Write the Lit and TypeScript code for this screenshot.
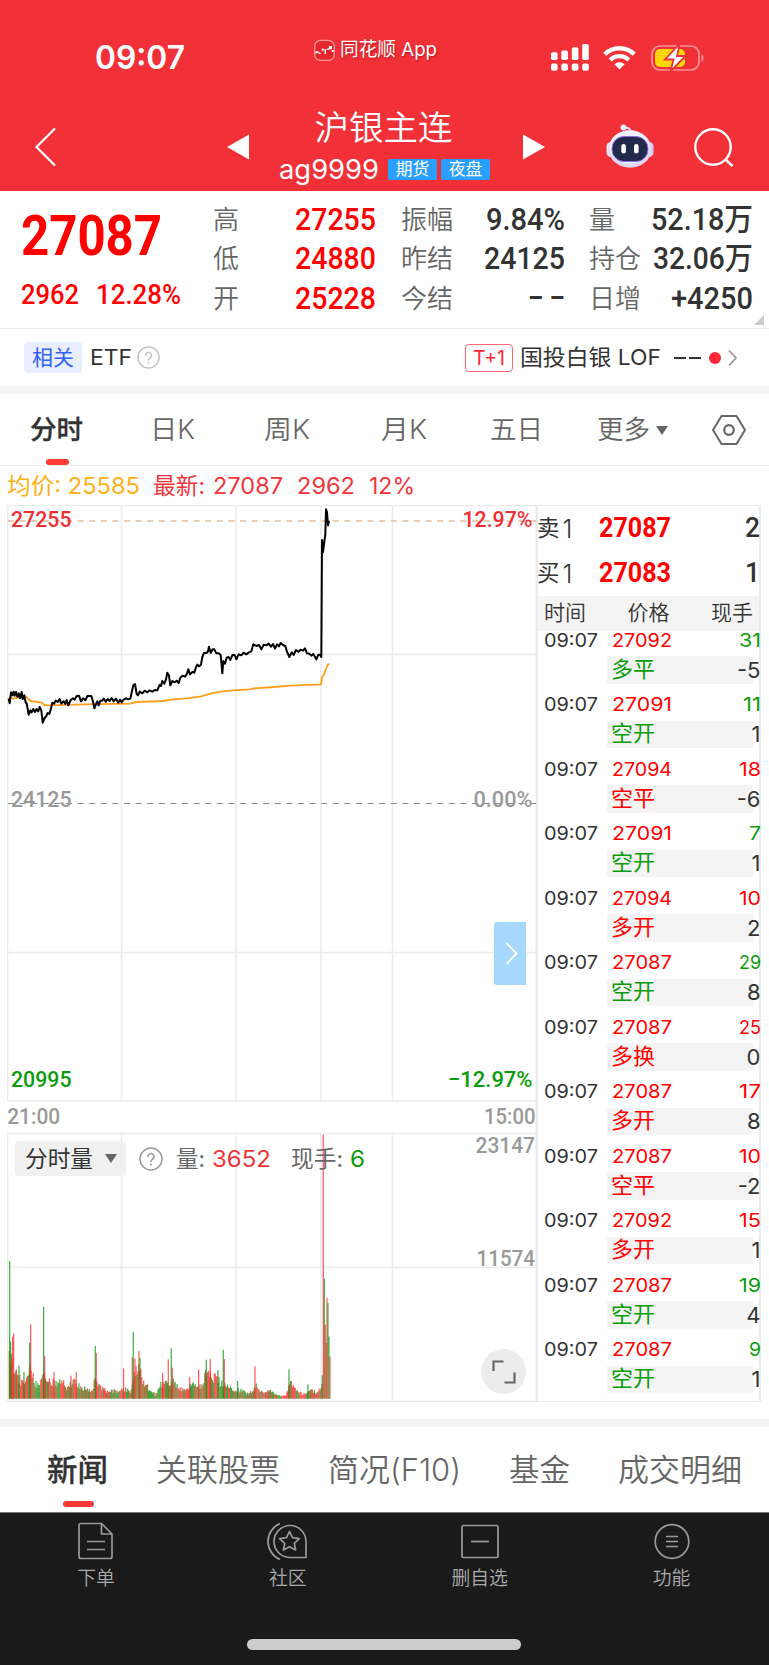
import { LitElement, html, svg, css } from "lit";
import { customElement, property, query } from "lit/decorators.js";

/** Single line of text, condensed or widened horizontally to a set width. */
@customElement("fit-text")
class FitText extends LitElement {
  static styles = css`
    :host { display: block; flex: none; white-space: nowrap; }
    span { display: inline-block; transform-origin: 0 50%; vertical-align: top; }
  `;
  @property({ type: Number }) w = 0;
  @query("span") inner!: HTMLElement;
  render() { return html`<span><slot></slot></span>`; }
  updated() {
    if (!this.w) return;
    const natural = this.inner.offsetWidth;
    if (!natural) return;
    this.style.width = this.w + "px";
    this.inner.style.transform = `scaleX(${this.w / this.inner.getBoundingClientRect().width})`;
  }
}

const t = (text: string, w = 0, cls = "") => html`<fit-text class=${cls} .w=${w}>${text}</fit-text>`;

const UP = "#ff0000";
const DOWN = "#0a9c0a";

interface Tick { price: string; qty: number; qtyUp: boolean; kind: string; up: boolean; delta: string; }
const tick = (price: string, qty: number, qtyUp: boolean, kind: string, up: boolean, delta: string): Tick =>
  ({ price, qty, qtyUp, kind, up, delta });
const TICKS: Tick[] = [
  tick("27092", 31, false, "多平", false, "-5"),
  tick("27091", 11, false, "空开", false, "1"),
  tick("27094", 18, true, "空平", true, "-6"),
  tick("27091", 7, false, "空开", false, "1"),
  tick("27094", 10, true, "多开", true, "2"),
  tick("27087", 29, false, "空开", false, "8"),
  tick("27087", 25, true, "多换", true, "0"),
  tick("27087", 17, true, "多开", true, "8"),
  tick("27087", 10, true, "空平", true, "-2"),
  tick("27092", 15, true, "多开", true, "1"),
  tick("27087", 19, false, "空开", false, "4"),
  tick("27087", 9, false, "空开", false, "1"),
];

// Price trace, three units per pixel, y measured from 117px above the plot.
const PRICE = `26,925 29,940 33,907 37,916 41,905 44,917 48,906 52,920 56,910 60,925 65,906 68,927 73,916 77,938 80,940
86,974 91,961 95,967 100,957 105,966 110,957 115,964 119,951 124,962 128,998 134,984 139,978 143,969 148,972 153,955
157,938 162,941 167,932 173,936 179,927 184,941 191,934 196,942 200,930 205,946 212,930 219,925 224,929 230,918 237,917
243,934 249,925 256,931 262,918 269,918 274,918 279,935 283,955 289,940 292,934 296,946 301,932 307,932 311,926 317,935
323,927 329,933 335,924 341,934 348,926 355,938 360,929 365,937 371,929 378,925 385,928 391,926 396,903 400,886 405,882
410,912 414,916 419,905 427,910 434,902 442,907 449,901 457,905 464,900 472,901 479,884 483,888 487,873 493,881 498,868
502,848 507,857 511,886 517,873 524,877 530,872 536,879 541,863 548,857 555,860 560,853 565,838 570,853 577,846 583,848
588,831 592,824 597,829 603,824 607,801 612,789 620,789 624,784 627,770 632,789 638,778 643,778 649,790 656,790 662,795
667,850 670,813 675,821 680,803 686,801 691,810 698,794 704,795 709,808 716,793 724,796 731,788 739,793 747,787 754,784
760,763 769,768 777,765 784,778 791,764 799,766 806,761 813,770 819,762 825,776 831,763 837,769 842,759 849,765 856,768
861,785 868,801 875,787 881,795 888,780 895,785 902,779 909,782 915,775 921,790 928,791 934,797 940,792 949,808 955,794 960,794 964,801
966,450 969,486 973,455 976,432 978,358 981,366 984,406 987,392`;
const AVERAGE = `26,922 40,926 62,921 78,920 92,933 125,938 132,945 150,946 250,943 390,941 408,936 490,933 512,929 562,925 604,919 630,911
668,904 700,901 750,898 762,895 822,891 870,887 963,883 966,862 971,855 977,840 983,824 988,821`;

// Volume profile: heights in thirds of a pixel along the session.
const PROFILE: [number, number][] = [
  [26, 120], [45, 72], [55, 55], [75, 38], [84, 95], [95, 80], [105, 40], [120, 45], [130, 62], [150, 42], [170, 48], [190, 42],
  [200, 32], [212, 44], [225, 45], [245, 30], [275, 20], [285, 60], [300, 32], [320, 20], [350, 22], [375, 28], [390, 15],
  [400, 72], [415, 90], [430, 45], [445, 28], [465, 10], [480, 40], [505, 42], [520, 48], [535, 28], [560, 22], [575, 38],
  [600, 38], [618, 70], [640, 62], [665, 40], [680, 42], [700, 25], [720, 24], [745, 12], [765, 38], [785, 18], [810, 20],
  [830, 10], [855, 8], [870, 46], [890, 22], [905, 12], [930, 24], [945, 18], [962, 28], [965, 60],
];
const SPIKES: [number, number, number][] = [
  [28, 413, 0], [31, 171, 0], [34, 124, 1], [37, 186, 1], [40, 196, 1], [48, 88, 1], [56, 99, 0], [71, 80, 0], [88, 167, 0], [91, 223, 1],
  [130, 276, 0], [133, 128, 1], [161, 80, 1], [212, 69, 1], [228, 80, 1], [285, 158, 0], [288, 137, 1], [370, 91, 1], [396, 124, 1],
  [399, 200, 0], [404, 120, 1], [416, 143, 1], [419, 123, 0], [487, 77, 1], [504, 118, 1], [513, 151, 0], [516, 93, 1], [568, 65, 1],
  [595, 87, 1], [618, 117, 0], [630, 119, 1], [653, 86, 0], [669, 147, 0], [672, 119, 1], [712, 53, 0], [764, 97, 1], [866, 88, 0],
  [923, 43, 0], [966, 70, 0], [969, 792, 1], [972, 360, 0], [975, 222, 1], [978, 167, 1], [980, 303, 1], [983, 287, 0], [986, 186, 0], [989, 126, 1],
];

function volumeBars() {
  const bars = [];
  let seed = 17;
  const rand = () => ((seed = (seed * 1103515245 + 12345) % 2147483648) / 2147483648);
  let k = 0;
  for (let x = 26; x < 966; x += 2.86) {
    while (k < PROFILE.length - 2 && PROFILE[k + 1][0] < x) k++;
    const [x0, h0] = PROFILE[k], [x1, h1] = PROFILE[k + 1];
    const h = (h0 + (h1 - h0) * ((x - x0) / (x1 - x0))) * (0.75 + 0.6 * rand());
    bars.push({ x, h, up: rand() > 0.45 });
  }
  for (const [x, h, up] of SPIKES) bars.push({ x: x - 1, h, up: !!up });
  return bars.map(b => svg`<rect class=${b.up ? "bar up" : "bar dn"} x=${b.x / 3} y=${(986 - b.h) / 3} width="1.25" height=${b.h / 3}></rect>`);
}

const label = (text: string, x: number, cy: number, w: number, cls: string) =>
  svg`<text class="lab ${cls}" x=${x} y=${cy + 7.5} textLength=${w} lengthAdjust="spacingAndGlyphs">${text}</text>`;

const help = (s: number, c: string) => html`<svg width=${s} height=${s} viewBox="0 0 24 24" fill="none" stroke=${c} stroke-width="1.5" stroke-linecap="round">
  <circle cx="12" cy="12" r="11"></circle><path d="M9 9.6a3 3 0 1 1 4.3 2.7c-.9.5-1.3 1-1.3 2.2"></path><path d="M12 17.4v.3" stroke-width="1.8"></path></svg>`;

@customElement("app-root")
class AppRoot extends LitElement {
  static styles = css`
    :host { display: block; width: 769px; height: 1665px; overflow: hidden; background: #fff; color: #333;
      font-family: Inter, "Noto Sans CJK SC", sans-serif; font-size: 22px; line-height: 1.2; }
    * { box-sizing: border-box; }
    svg { display: block; flex: none; }
    .din { font-family: Roboto, "Noto Sans CJK SC", sans-serif; font-weight: 500; }
    .row { display: flex; align-items: center; }
    .spring { flex: 1; }

    .header { height: 191px; background: #f23038; color: #fff; }
    .status { height: 108px; padding: 7px 64px 0 95px; }
    .clock { font-size: 33px; font-weight: 600; }
    .brand { margin: -14px 0 0 129px; gap: 5px; font-size: 19px; text-shadow: 1px 1px 2px #8008; }
    .signal { margin-right: 14px; }
    .wifi { margin-right: 15px; }
    .nav { height: 83px; padding: 0 37px 5px 34px; }
    .prev { margin-left: 171px; }
    .titles { width: 213px; margin: 0 33px 0 29px; }
    .title { font-size: 34.5px; line-height: 42px; margin: 0 0 0 -2px; font-weight: 350; justify-content: center; }
    .code { font-size: 27px; line-height: 36px; gap: 4px; margin-top: 5px; }
    .code .sym { margin: -2px 5px 0 0; }
    .chip { width: 49px; height: 21px; border-radius: 2px; background: #29a0ff; font-size: 16.8px; line-height: 21px; text-align: center; margin-top: -2px; }
    .robot { margin: -1px 40px 0 60px; }

    .quote { height: 138px; border-bottom: 1.5px solid #ebebeb; position: relative; display: flex; }
    .last { width: 214px; padding: 11px 0 0 21px; color: #f00; }
    .big { font-size: 56px; line-height: 68px; font-weight: 700; }
    .chg { font-size: 28.5px; line-height: 34px; gap: 17px; margin-top: 8px; }
    .stats { display: grid; grid-template-columns: 163px 25px 164px 24px 164px; grid-auto-rows: 39.3px; padding-top: 9px; align-content: start; margin-left: -1px; }
    .stat { display: flex; justify-content: space-between; align-items: center; font-size: 26px; color: #666; font-weight: 350; }
    .stat .din { font-size: 31px; color: #333; }
    .stat .red { color: #f00; }
    .corner { position: absolute; right: 5px; bottom: 3px; }

    .related { height: 57px; padding: 0 32px 0 24px; font-size: 22px; }
    .tag { width: 58px; height: 31px; border-radius: 4px; background: #e8eeff; color: #2f62f5; font-size: 21px; line-height: 31px; padding-left: 8px; margin-right: 8px; }
    .t1 { width: 48px; height: 28px; border: 1.5px solid #ff6675; border-radius: 4px; color: #ff2436; font-size: 20px; display: grid; place-items: center; margin-right: 7px; }
    .dot { width: 12px; height: 12px; border-radius: 6px; background: #ff2436; margin: 0 7px 0 7px; }
    .band { height: 8px; background: #f4f4f4; }

    .tabs { height: 72px; border-bottom: 1.5px solid #ededed; font-size: 26.5px; color: #666; font-weight: 350; padding: 1px 23px 0 30px; position: relative; }
    .active { color: #333; font-weight: 500; -webkit-text-stroke: .3px #333; }
    .mark { position: absolute; border-radius: 3px; background: #ff3933; height: 6px; }
    .tabs .mark { left: 46px; width: 23px; bottom: 0; }
    .info { height: 39px; padding: 0 0 0 7px; font-size: 22.7px; color: #f0353a; }
    .avg { color: #ffb016; }

    .board { display: flex; height: 897px; padding-left: 7px; position: relative; }
    .charts { width: 531px; position: relative; }
    .grid { stroke: #ebebeb; stroke-width: 1.5; fill: none; }
    .lab { font: 500 22.7px Roboto, sans-serif; }
    .lr { fill: #ee3035; } .lg { fill: #0a9c0a; } .ly { fill: #999; }
    .bar { opacity: .76; } .up { fill: #fc2b2f; } .dn { fill: #0a960a; }
    .legend { position: absolute; left: 8px; top: 636px; height: 35px; font-size: 22.5px; color: #666; }
    .pill { width: 111px; height: 35px; border-radius: 4px; background: rgba(238,238,238,.85); color: #333; padding: 0 9px 0 10px; justify-content: space-between; margin-right: 13px; }
    .drawer { position: absolute; left: 487px; top: 417px; width: 32px; height: 63px; border-radius: 3px 0 0 3px; background: #a6d8fd; display: grid; place-items: center; padding-left: 3px; }
    .expand { position: absolute; left: 474px; top: 844px; width: 45px; height: 45px; border-radius: 50%; background: #ececec; display: grid; place-items: center; }

    .tape { width: 223px; border: 1.5px solid #ebebeb; border-left: 0; border-right-width: 2px; }
    .level { height: 45px; }
    .level .nm { width: 61px; font-size: 22.5px; gap: 3px; }
    .level .nm span { margin: -3px 0 0 -1px; }
    .level .one { font-size: 25px; font-weight: 350; }
    .level .px { font-size: 27px; color: #f00; font-weight: 700; }
    .level .q { font-size: 27px; font-weight: 500; margin-right: -1px; }
    .cols { height: 35px; background: #f4f4f4; justify-content: space-between; padding: 0 6px 2px 6px; font-size: 21px; font-weight: 350; }
    .tick { height: 64.5px; font-size: 19px; }
    .tick .a { height: 20px; padding-left: 6px; margin-right: -1.5px; }
    .tick .b { height: 27.5px; margin: 5px 0 0 69px; background: linear-gradient(#f4f4f4,#f4f4f4) no-repeat 0 0 / 146px 100%; }
    .tick .k { padding: 0 0 2px 4px; font-size: 22px; }
    .tick .d { font-size: 22px; margin-right: -1.5px; }
    .tick .price { margin-left: 14px; }

    .sections { height: 85px; font-size: 31px; color: #666; font-weight: 350; padding: 0 27px 0 47px; justify-content: space-between; position: relative; }
    .sections .mark { left: 63px; width: 31px; bottom: 5px; }
    .footer { height: 153px; background: #1a1a1a; border-top: 1px solid #777; color: #aaa; font-size: 18.8px; font-weight: 350; padding-right: 1.5px; }
    .items { display: grid; grid-template-columns: repeat(4, 1fr); height: 126px; padding-top: 8px; }
    .item { display: flex; flex-direction: column; align-items: center; gap: 7px; }
    .home { width: 274px; height: 11px; border-radius: 6px; background: #ccc; margin: 0 auto; }
  `;

  header() {
    return html`<div class="header">
      <div class="status row">
        ${t("09:07", 90, "clock")}
        <div class="brand row">
          <svg width="21" height="23" viewBox="0 0 21 23"><rect x=".7" y="1.4" width="19.6" height="20" rx="6" fill="#e5262c" stroke="#ff9a9a" stroke-width="1.3"></rect>
            <path d="M1.5 12.3h3v2h-3zM5 13.5h1.6v1.6H5zM7.5 10.5l1.2-1.5 1.3 1.7-1 1.8zM10.5 10h1.5v5h-1.5zM13 9.5h2v1.6h-2zM15 7h3v3.2h-3zM17.8 11h2v2h-2z" fill="#fff"></path></svg>
          ${t("同花顺 App", 97)}
        </div>
        <div class="spring"></div>
        <svg class="signal" width="38" height="28" viewBox="0 0 38 28" fill="#fff">
          ${[[0, 8.3, 7.7], [10.3, 6.5, 9.5], [20.8, 3.3, 12.7], [31.2, 0, 16]].map(([x, y, h]) => svg`
            <rect x=${x} y=${y} width="6.6" height=${h} rx="1.8"></rect><rect x=${x} y="19.6" width="6.6" height="7.2" rx="2"></rect>`)}
        </svg>
        <svg class="wifi" width="33" height="25" viewBox="0 0 33 25" fill="none" stroke="#fff" stroke-width="4.4">
          <path d="M1.8 9.2a21 21 0 0 1 29.4 0"></path><path d="M7.2 15a13.2 13.2 0 0 1 18.6 0"></path>
          <path d="M16.5 24.4 11.4 19.2a7.4 7.4 0 0 1 10.2 0z" fill="#fff" stroke="none"></path></svg>
        <svg width="54" height="28" viewBox="0 0 54 28">
          <rect x="1" y="2" width="47" height="24" rx="8" fill="none" stroke="#f99298" stroke-width="1.7"></rect>
          <path d="M50.5 10v8c2.6-1 2.6-7 0-8z" fill="#f99298"></path>
          <rect x="4" y="5" width="30" height="18" rx="5" fill="#ffd60a"></rect>
          <path d="M28.5 0 14 15.5h8.500L19.5 27.5 34.5 12H26z" fill="#fff" stroke="#f23038" stroke-width="1.8"></path></svg>
      </div>
      <div class="nav row">
        <svg width="22" height="40" viewBox="0 0 22 40" fill="none" stroke="#fff" stroke-width="2.2"><path d="M21 1.5 2.5 20 21 38.5"></path></svg>
        <svg class="prev" width="23" height="26"><path d="M0 13 22 .5v25z" fill="#fff"></path></svg>
        <div class="titles">
          <div class="title row">${t("沪银主连")}</div>
          <div class="code row">${t("ag9999", 100, "sym")}<div class="chip">期货</div><div class="chip">夜盘</div></div>
        </div>
        <svg width="23" height="26"><path d="M22 13 0 .5v25z" fill="#fff"></path></svg>
        <svg class="robot" width="48" height="45" viewBox="0 0 48 45">
          <path d="M18.500 4c4-1 6 .5 6.500 5" fill="none" stroke="#e8e4f8" stroke-width="2"></path><circle cx="17.5" cy="3.5" r="2.9" fill="#f3f0fc"></circle>
          <rect x=".5" y="18" width="9" height="15" rx="4.5" fill="#e6e3f6"></rect><rect x="38.5" y="18" width="9" height="15" rx="4.5" fill="#d3cff2"></rect>
          <ellipse cx="24" cy="25" rx="21.3" ry="18.8" fill="#dcd9f4"></ellipse><ellipse cx="23.5" cy="23" rx="20" ry="16.5" fill="#f2f0fb"></ellipse>
          <rect x="6" y="12.5" width="36" height="25" rx="12" fill="#222a4c" stroke="#8c6fe0" stroke-width="1"></rect>
          <rect x="15.3" y="20" width="4.6" height="9.5" rx="2.3" fill="#fff"></rect><rect x="28" y="20" width="4.6" height="9.5" rx="2.3" fill="#fff"></rect></svg>
        <svg width="39" height="40" viewBox="0 0 39 40" fill="none" stroke="#fff" stroke-width="2.4"><circle cx="19" cy="20" r="17.7"></circle><path d="m31.500 32.500 7 6.500"></path></svg>
      </div>
    </div>`;
  }

  quote() {
    const s = (name: string, value: string, w: number, red = false) =>
      html`<div class="stat"><span>${name}</span>${t(value, w, red ? "din red" : "din")}</div>`;
    return html`<div class="quote">
      <div class="last">
        ${t("27087", 141, "din big")}
        <div class="chg row">${t("2962", 58, "din")}${t("12.28%", 85, "din")}</div>
      </div>
      <div class="stats">
        ${s("高", "27255", 81, true)}<i></i>${s("振幅", "9.84%", 79)}<i></i>${s("量", "52.18万", 102)}
        ${s("低", "24880", 81, true)}<i></i>${s("昨结", "24125", 81)}<i></i>${s("持仓", "32.06万", 100)}
        ${s("开", "25228", 81, true)}<i></i>${s("今结", "– –", 37)}<i></i>${s("日增", "+4250", 82)}
      </div>
      <svg class="corner" width="10" height="10"><path d="M10 0v10H0z" fill="#ccc"></path></svg>
    </div>
    <div class="related row">
      <div class="tag">相关</div>${t("ETF", 42)}
      <div style="width:5px"></div>${help(23, "#c4c4c4")}
      <div class="spring"></div>
      <div class="t1">${t("T+1", 32)}</div>${t("国投白银 LOF", 141)}
      <div style="width:13px"></div>
      <svg width="28" height="4"><path d="M0 2h12M15 2h12" stroke="#333" stroke-width="2"></path></svg>
      <div class="dot"></div>
      <svg width="9" height="16" fill="none" stroke="#999" stroke-width="1.8"><path d="m1 .5 7 7.5-7 7.5"></path></svg>
    </div>
    <div class="band"></div>`;
  }

  tabs() {
    const gap = (n: number) => html`<div style="width:${n}px"></div>`;
    return html`<div class="tabs row">
      ${t("分时", 53, "active")}${gap(67)}${t("日K", 45)}${gap(69)}${t("周K", 46)}${gap(71)}${t("月K", 46)}${gap(63)}${t("五日", 53)}${gap(54)}${t("更多", 53)}
      ${gap(6)}<svg width="12" height="9"><path d="M0 0h12L6 9z" fill="#666"></path></svg>
      <div class="spring"></div>
      <svg width="34" height="32" viewBox="0 0 34 32" fill="none" stroke="#666" stroke-width="2" stroke-linejoin="round"><path d="M9.5 2h15L33 16l-8.500 14h-15L1 16z"></path><circle cx="17" cy="16" r="4.8" stroke-width="2.2"></circle></svg>
      <div class="mark"></div>
    </div>
    <div class="info row">
      ${t("均价: 25585", 133, "avg")}${gap(13)}${t("最新:", 52)}${gap(8)}${t("27087", 70)}${gap(14)}${t("2962", 58)}${gap(14)}${t("12%", 46)}
    </div>`;
  }

  charts() {
    return html`<div class="charts">
      <svg width="531" height="897" viewBox="7 505 531 897">
        <path class="grid" d="M7.5 505.5H538M7.5 654.5H536M7.5 952.5H536M7.5 1101H536M7.5 1133.5H536M7.5 1267.5H536M7.5 1401.2H536"></path>
        <path class="grid" d="M7.5 505V1101M121.5 505V1101M236 505V1101M321 505V1101M392.5 505V1101M7.5 1133V1401M121.5 1133V1401M236 1133V1401M321 1133V1401M392.5 1133V1401"></path>
        <path d="M536.8 505V1402" stroke="#ebebeb" stroke-width="2.6"></path>
        <path d="M8 521H537" stroke="#dfc09a" stroke-width="1.5" stroke-dasharray="6 5.6"></path>
        <path d="M8 803.5H537" stroke="#888" stroke-width="1.1" stroke-dasharray="6 5.6"></path>
        <g transform="translate(0 390) scale(.33333)" fill="none" stroke-linejoin="round">
          <polyline points=${AVERAGE} stroke="#ff9f1c" stroke-width="5.5"></polyline>
          <polyline points=${PRICE} stroke="#000" stroke-width="6"></polyline>
        </g>
        <g transform="translate(0 1070)">${volumeBars()}</g>
        ${label("27255", 11, 519.5, 60.5, "lr")}${label("12.97%", 462.5, 519.5, 70, "lr")}
        ${label("24125", 11, 799.5, 60.5, "ly")}${label("0.00%", 473.5, 799.5, 59, "ly")}
        ${label("20995", 11, 1079.5, 60.5, "lg")}${label("−12.97%", 448, 1079.5, 84.5, "lg")}
        ${label("21:00", 7.2, 1116.5, 53, "ly")}${label("15:00", 484, 1116.5, 51.5, "ly")}
        ${label("23147", 475.5, 1145, 59.5, "ly")}${label("11574", 476.5, 1258, 58.5, "ly")}
      </svg>
      <div class="legend row">
        <div class="pill row">${t("分时量", 68)}<svg width="12" height="9"><path d="M0 0h12L6 9z" fill="#666"></path></svg></div>
        ${help(24, "#999")}
        <div style="width:13px"></div>${t("量:", 29)}
        <div style="width:7px"></div><span style="color:#f0353a">${t("3652", 59)}</span>
        <div style="width:20px"></div>${t("现手:", 52)}
        <div style="width:7px"></div><span style="color:#0a9c0a">${t("6", 15)}</span>
      </div>
      <div class="drawer"><svg width="13" height="23" fill="none" stroke="#fff" stroke-width="2"><path d="m1.500 1 10 10.500-10 10.500"></path></svg></div>
      <div class="expand"><svg width="24" height="24" fill="none" stroke="#666" stroke-width="2.2"><path d="M1.5 11V1.5H11.5M22.5 12.5V22.5H12.5"></path></svg></div>
    </div>`;
  }

  tape() {
    const level = (name: string, price: string, q: string) => html`<div class="level row">
      <div class="nm row"><span>${name}</span>${t("1", 0, "one")}</div>${t(price, 72, "din px")}<div class="spring"></div>${t(q, 15, "din q")}</div>`;
    return html`<div class="tape">
      ${level("卖", "27087", "2")}${level("买", "27083", "1")}
      <div class="cols row"><span>时间</span><span>价格</span><span>现手</span></div>
      ${TICKS.map(k => html`<div class="tick">
        <div class="a row">${t("09:07", 54)}
          <span class="price" style="color:${UP}">${t(k.price, 60)}</span><div class="spring"></div>
          <span style="color:${k.qtyUp ? UP : DOWN}">${t(String(k.qty), k.qty === 11 ? 18 : k.qty > 9 ? 22 : 12)}</span></div>
        <div class="b row"><span class="k" style="color:${k.up ? UP : DOWN}">${k.kind}</span><div class="spring"></div>${t(k.delta, 0, "d")}</div>
      </div>`)}
    </div>`;
  }

  footer() {
    const item = (icon: unknown, name: string) => html`<div class="item">
      <svg width="42" height="40" viewBox="0 0 42 40" fill="none" stroke="#999" stroke-width="1.7" stroke-linejoin="round">${icon}</svg><span>${name}</span></div>`;
    return html`<div class="footer">
      <div class="items">
        ${item(svg`<path d="M6 2.5h20.500L37 13v22.500a2 2 0 0 1-2 2H6a2 2 0 0 1-2-2v-31a2 2 0 0 1 2-2zM26.5 2.500V13H37M12 20.5h18M12 28.5h18"></path>`, "下单")}
        ${item(svg`<path d="M39 36.5H22.5A16 16 0 1 1 39 20.5zM13 2.5a19.500 19.500 0 0 0 0 36"></path><path d="m22.500 10.500 3 6.200 6.800.9-5 4.700 1.300 6.700-6.100-3.300-6.100 3.300 1.300-6.700-5-4.700 6.800-.9z"></path>`, "社区")}
        ${item(svg`<rect x="3" y="4.5" width="36" height="32" rx="1.5"></rect><path d="M12 20.5h18"></path>`, "删自选")}
        ${item(svg`<circle cx="21" cy="20.5" r="16.8"></circle><path d="M15 15.5h12M15 20.5h12M15 25.5h12"></path>`, "功能")}
      </div>
      <div class="home"></div>
    </div>`;
  }

  render() {
    return html`${this.header()}${this.quote()}${this.tabs()}
      <div class="board">${this.charts()}${this.tape()}</div>
      <div style="height:17px"></div><div class="band"></div>
      <div class="sections row">
        ${t("新闻", 61, "active")}${t("关联股票", 124)}${t("简况(F10)", 133)}${t("基金", 61)}${t("成交明细", 124)}<div class="mark"></div>
      </div>
      ${this.footer()}`;
  }
}
